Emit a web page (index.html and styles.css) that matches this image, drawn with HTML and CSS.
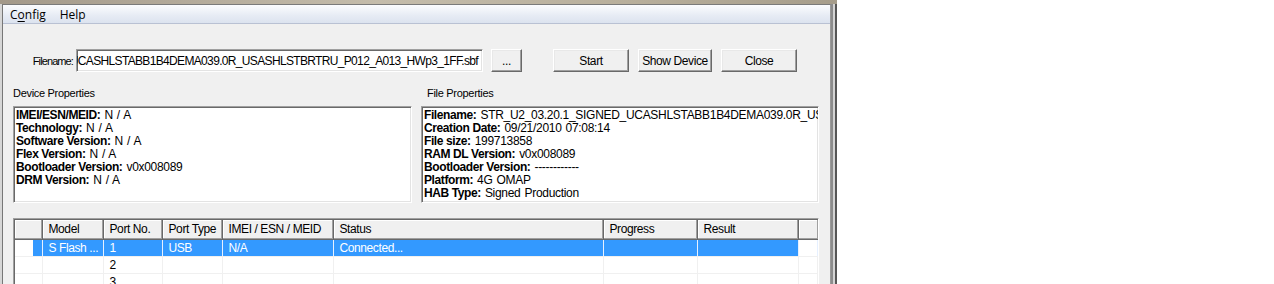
FILE: index.html
```html
<!DOCTYPE html>
<html lang="en">
<head>
    <meta charset="UTF-8">
    <title>Flash Tool</title>
    <link rel="stylesheet" href="styles.css">
</head>
<body>
    <div class="app">
        <div class="frame-top"></div>
        <div class="frame-row">
            <div class="frame-left"></div>
            <div class="window">
                <div class="menubar">
                    <span class="menu-item">C<u>o</u>nfig</span>
                    <span class="menu-item">Help</span>
                </div>
                <div class="dialog">
                    <div class="file-row">
                        <label class="file-label" for="filename">Filename:</label>
                        <div class="textbox" id="filename">
                            <span>UCASHLSTABB1B4DEMA039.0R_USASHLSTBRTRU_P012_A013_HWp3_1FF.sbf</span>
                        </div>
                        <button class="btn btn-browse">...</button>
                        <button class="btn btn-start">Start</button>
                        <button class="btn btn-show">Show Device</button>
                        <button class="btn btn-close">Close</button>
                    </div>

                    <div class="props">
                        <div class="group">
                            <div class="group-title">Device Properties</div>
                            <div class="prop-box">
                                <div><b>IMEI/ESN/MEID:</b> N / A</div>
                                <div><b>Technology:</b> N / A</div>
                                <div><b>Software Version:</b> N / A</div>
                                <div><b>Flex Version:</b> N / A</div>
                                <div><b>Bootloader Version:</b> v0x008089</div>
                                <div><b>DRM Version:</b> N / A</div>
                            </div>
                        </div>
                        <div class="group">
                            <div class="group-title file-title">File Properties</div>
                            <div class="prop-box">
                                <div><b>Filename:</b> STR_U2_03.20.1_SIGNED_UCASHLSTABB1B4DEMA039.0R_USAS</div>
                                <div><b>Creation Date:</b> 09/21/2010 07:08:14</div>
                                <div><b>File size:</b> 199713858</div>
                                <div><b>RAM DL Version:</b> v0x008089</div>
                                <div><b>Bootloader Version:</b> ------------</div>
                                <div><b>Platform:</b> 4G OMAP</div>
                                <div><b>HAB Type:</b> Signed Production</div>
                            </div>
                        </div>
                    </div>

                    <div class="list">
                        <table class="devices">
                            <colgroup>
                                <col style="width: 27px">
                                <col style="width: 61px">
                                <col style="width: 59px">
                                <col style="width: 60px">
                                <col style="width: 111px">
                                <col style="width: 270px">
                                <col style="width: 94px">
                                <col style="width: 101px">
                                <col>
                            </colgroup>
                            <thead>
                                <tr>
                                    <th></th>
                                    <th>Model</th>
                                    <th>Port No.</th>
                                    <th>Port Type</th>
                                    <th>IMEI / ESN / MEID</th>
                                    <th>Status</th>
                                    <th>Progress</th>
                                    <th>Result</th>
                                    <th class="filler"></th>
                                </tr>
                            </thead>
                            <tbody>
                                <tr class="selected">
                                    <td class="first"></td>
                                    <td>S Flash ...</td>
                                    <td>1</td>
                                    <td>USB</td>
                                    <td>N/A</td>
                                    <td>Connected...</td>
                                    <td></td>
                                    <td></td>
                                    <td class="filler"></td>
                                </tr>
                                <tr>
                                    <td></td><td></td><td>2</td><td></td><td></td><td></td><td></td><td></td><td class="filler"></td>
                                </tr>
                                <tr>
                                    <td></td><td></td><td>3</td><td></td><td></td><td></td><td></td><td></td><td class="filler"></td>
                                </tr>
                            </tbody>
                        </table>
                    </div>
                </div>
            </div>
            <div class="frame-right"></div>
        </div>
    </div>
</body>
</html>
```

FILE: styles.css
```css
body {
    margin: 0;
    background: #ffffff;
    font-family: 'Liberation Sans', Arial, sans-serif;
    font-size: 11px;
    color: #000;
}
.app {
    width: 837px;
    height: 284px;
    overflow: hidden;
    display: flex;
    flex-direction: column;
}
.frame-top {
    height: 4px;
    flex-shrink: 0;
    background: linear-gradient(to right, #a3998a, #c4bcab 45%, #b8af9c 75%, #a69d8b);
}
.frame-row {
    flex: 1;
    display: flex;
}
.frame-left {
    width: 2px;
    background: #d6d6d6;
}
.frame-right {
    width: 6px;
    background: linear-gradient(to right, #8c8c8c 0, #8c8c8c 2px, #d4d4d4 2px, #d4d4d4 4px, #565656 4px);
}
.window {
    flex: 1;
    display: flex;
    flex-direction: column;
    border-top: 1px solid #7a7a7a;
    border-left: 1px solid #777;
    border-right: 1px solid #9a9a9a;
    background: #f0f0f0;
}
.menubar {
    height: 18px;
    display: flex;
    align-items: center;
    padding-left: 1px;
    background: linear-gradient(to bottom, #fbfcfe, #e6ebf4 60%, #dce3ef);
    border-bottom: 1px solid #b9c1d3;
    font-family: 'Open Sans', 'Noto Sans', sans-serif;
    font-size: 12px;
}
.menu-item {
    padding: 0 7px 0 6px;
}
.menu-item + .menu-item {
    margin-left: 1px;
}
.menu-item u {
    text-decoration-thickness: 1px;
    text-underline-offset: 2px;
}
.dialog {
    flex: 1;
    padding: 25px 0 0 10px;
}
.file-row {
    display: flex;
    align-items: center;
    height: 23px;
}
.file-label {
    width: 60px;
    text-align: right;
    margin-right: 3px;
    font-size: 11px;
    letter-spacing: -0.9px;
}
.textbox {
    box-sizing: border-box;
    width: 407px;
    height: 23px;
    border: 1px solid;
    border-color: #a0a0a0 #fff #fff #a0a0a0;
    box-shadow: inset 1px 1px #696969, inset -1px -1px #e3e3e3;
    background: #fff;
    display: flex;
    justify-content: flex-end;
    align-items: center;
    overflow: hidden;
    white-space: nowrap;
    padding: 0 4px 0 0;
    font-size: 12px;
    letter-spacing: -0.66px;
}
.btn {
    box-sizing: border-box;
    height: 23px;
    padding: 0;
    border: 1px solid;
    border-color: #fff #696969 #696969 #fff;
    box-shadow: inset -1px -1px #a0a0a0, inset 1px 1px #e8e8e8;
    background: #f0f0f0;
    font-family: 'Liberation Sans', Arial, sans-serif;
    font-size: 12px;
    letter-spacing: -0.4px;
    color: #000;
}
.btn-browse {
    width: 31px;
    margin-left: 8px;
}
.btn-start {
    width: 76px;
    margin-left: 31px;
}
.btn-show {
    width: 74px;
    margin-left: 9px;
}
.btn-close {
    width: 76px;
    margin-left: 9px;
}
.props {
    display: grid;
    grid-template-columns: 399px 398px;
    column-gap: 9px;
    margin-top: 15px;
}
.group-title {
    height: 13px;
    line-height: 13px;
    margin-bottom: 6px;
    letter-spacing: -0.3px;
}
.file-title {
    padding-left: 6px;
}
.prop-box {
    height: 93px;
    border: 1px solid;
    border-color: #a0a0a0 #fff #fff #a0a0a0;
    box-shadow: inset 1px 1px #696969, inset -1px -1px #e3e3e3;
    background: #fff;
    padding: 2px 0 0 2px;
    overflow: hidden;
    white-space: nowrap;
    font-size: 12px;
    line-height: 13px;
    letter-spacing: -0.3px;
    word-spacing: 1px;
}
.prop-box b {
    letter-spacing: -0.4px;
    word-spacing: 0;
}
.list {
    margin-top: 15px;
    width: 806px;
    height: 80px;
    border: 1px solid;
    border-color: #a0a0a0 #fff #fff #a0a0a0;
    box-shadow: inset 1px 1px #696969;
    background: #fff;
    padding: 1px 0 0 1px;
    box-sizing: border-box;
    overflow: hidden;
}
.devices {
    width: 803px;
    table-layout: fixed;
    border-collapse: collapse;
    font-size: 12px;
    letter-spacing: -0.4px;
}
.devices thead tr {
    height: 19px;
}
.devices tbody tr {
    height: 17px;
}
.devices th {
    padding: 0 0 0 6px;
    text-align: left;
    font-weight: normal;
    background: #f0f0f0;
    border-right: 1px solid #696969;
    border-bottom: 1px solid #696969;
    box-shadow: inset -1px -1px #a0a0a0, inset 1px 1px #fff;
    white-space: nowrap;
    overflow: hidden;
}
.devices th.filler {
    border-right: none;
}
.devices td {
    padding: 0 0 0 6px;
    border-right: 1px solid #f0f0f0;
    border-bottom: 1px solid #f0f0f0;
    white-space: nowrap;
    overflow: hidden;
}
.devices tr.selected td {
    background: #3399ff;
    color: #fff;
    border-right-color: #e6f0ff;
}
.devices tr.selected td.first {
    background: linear-gradient(to right, #fff 18px, #3399ff 18px);
}
.devices tr.selected td.filler {
    background: #fff;
}
```
